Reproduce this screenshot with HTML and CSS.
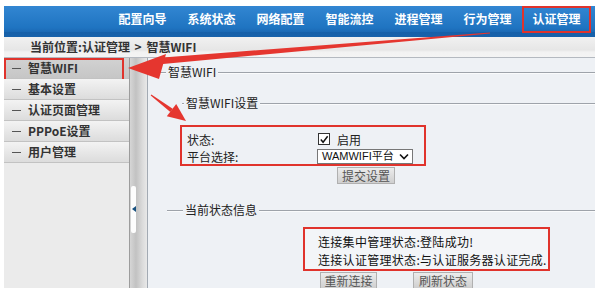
FILE: index.html
```html
<!DOCTYPE html>
<html lang="zh-CN">
<head>
<meta charset="utf-8">
<title>认证管理 - 智慧WIFI</title>
<link rel="stylesheet" href="styles.css">
</head>
<body>
<div class="page">
  <header class="header">
    <nav class="nav">
      <span class="nav-item">配置向导</span>
      <span class="nav-item">系统状态</span>
      <span class="nav-item">网络配置</span>
      <span class="nav-item">智能流控</span>
      <span class="nav-item">进程管理</span>
      <span class="nav-item">行为管理</span>
      <span class="nav-item active">认证管理</span>
    </nav>
  </header>
  <div class="crumb">当前位置:认证管理 &gt; 智慧WIFI</div>
  <div class="main">
    <aside class="sidebar">
      <div class="menu-item active"><span class="dash"></span>智慧WIFI</div>
      <div class="menu-item"><span class="dash"></span>基本设置</div>
      <div class="menu-item"><span class="dash"></span>认证页面管理</div>
      <div class="menu-item"><span class="dash"></span>PPPoE设置</div>
      <div class="menu-item"><span class="dash"></span>用户管理</div>
    </aside>
    <div class="splitter"><div class="pill"><span class="tri"></span></div></div>
    <section class="content">
      <div class="legend l1">智慧WIFI</div>
      <div class="legend l2">智慧WIFI设置</div>
      <div class="hl-box form-box">
        <div class="row r1">
          <span class="label">状态:</span>
          <span class="checkbox"><svg width="11" height="11" viewBox="0 0 11 11"><path d="M2 5.5 L4.5 8.5 L9.5 2" fill="none" stroke="#111" stroke-width="1.6"/></svg></span>
          <span class="check-text">启用</span>
        </div>
        <div class="row r2">
          <span class="label">平台选择:</span>
          <span class="select"><span class="select-text">WAMWIFI平台</span><svg class="chev" width="10" height="7" viewBox="0 0 10 7"><path d="M1 1.5 L5 5.5 L9 1.5" fill="none" stroke="#111" stroke-width="1.6"/></svg></span>
        </div>
      </div>
      <div class="btn submit">提交设置</div>
      <div class="legend l3">当前状态信息</div>
      <div class="hl-box status-box">
        <div class="status-line">连接集中管理状态:登陆成功!</div>
        <div class="status-line">连接认证管理状态:与认证服务器认证完成.</div>
      </div>
      <div class="btn-row">
        <div class="btn reconnect">重新连接</div>
        <div class="btn refresh">刷新状态</div>
      </div>
    </section>
  </div>
</div>
<svg class="arrows" width="604" height="300" viewBox="0 0 604 300">
  <polygon points="490,32.4 163,57.5 163,64 490,33.6" fill="#e5362f"/>
  <polygon points="128,68 166,54 159,79" fill="#e5362f"/>
  <polygon points="150.7,95.4 170.3,111.9 172.7,108.7 151.3,94.6" fill="#e5362f"/>
  <polygon points="186,121 166.8,116.3 176.2,103.9" fill="#e5362f"/>
</svg>
</body>
</html>
```
FILE: styles.css
```css
* {
  box-sizing: border-box;
  margin: 0;
  padding: 0;
}

html, body {
  background: #fff;
}

body {
  position: relative;
  font-family: "Noto Sans CJK SC", "Liberation Sans", sans-serif;
  font-size: 12px;
  color: #222;
  width: 604px;
  height: 300px;
  overflow: hidden;
}

.page {
  margin: 6px 0 0 4px;
  width: 591px;
  height: 282px;
  display: flex;
  flex-direction: column;
}

/* header */
.header {
  height: 31px;
  flex: none;
  background: linear-gradient(to bottom, #3286d2 0%, #1f74c1 70%, #1b69b4 84%, #1660a9 85%, #1862ab 100%);
}

.nav {
  display: flex;
  padding-left: 104px;
  height: 27px;
}

.nav-item {
  width: 69px;
  height: 27px;
  line-height: 26px;
  text-align: center;
  color: #fff;
  font-weight: 700;
  font-size: 12px;
}

.nav-item.active {
  border: 2px solid #e0332c;
  line-height: 22px;
}

/* breadcrumb */
.crumb {
  flex: none;
  height: 21px;
  line-height: 20px;
  padding-left: 26px;
  color: #333;
  font-weight: 700;
  word-spacing: 2px;
  background: linear-gradient(to bottom, #f1f1f1 0%, #e6e6e6 65%, #f2f2f2 75%, #f4f4f4 100%);
  border-bottom: 1px solid #b4b9c0;
}

/* main area */
.main {
  flex: 1;
  display: flex;
  overflow: hidden;
}

.sidebar {
  width: 125px;
  flex: none;
  background: #ebebeb;
}

.menu-item {
  position: relative;
  height: 21px;
  line-height: 20px;
  padding-left: 8px;
  color: #333;
  font-weight: 700;
  background: linear-gradient(to bottom, #f3f3f3, #dcdcdc);
  border-bottom: 1px solid #c2c2c2;
  display: flex;
  align-items: center;
}

.menu-item.active {
  background: linear-gradient(to bottom, #d2d2d2, #c6c6c6);
}

.menu-item.active::after {
  content: "";
  position: absolute;
  left: 0;
  top: 0;
  width: 116px;
  height: 22px;
  border: 2px solid #e0332c;
}

.dash {
  display: inline-block;
  width: 9px;
  height: 1px;
  background: #555;
  margin-right: 7px;
}

/* splitter */
.splitter {
  width: 19px;
  flex: none;
  border-left: 1px solid #9c9c9c;
  border-right: 1px solid #a3aab3;
  background: linear-gradient(to right, #d6d6d6 0%, #c2c2c2 35%, #dcdcdc 75%, #e8e8e8 100%);
  padding-left: 1px;
}

.pill {
  margin-top: 128px;
  width: 5px;
  height: 47px;
  background: #fdfdfd;
  border-radius: 2px;
  display: flex;
  align-items: center;
  justify-content: center;
}

.tri {
  width: 0;
  height: 0;
  border-right: 4px solid #17507f;
  border-top: 3px solid transparent;
  border-bottom: 3px solid transparent;
  margin-top: -2px;
}

/* content */
.content {
  flex: 1;
  background: #eef1f5;
  padding-top: 7px;
}

.legend {
  display: flex;
  align-items: center;
  height: 14px;
  line-height: 14px;
  color: #222;
  white-space: nowrap;
}

.legend::before,
.legend::after {
  content: "";
  border-top: 1px solid #9ea3aa;
  box-shadow: 0 1px 0 #fafbfc;
}

.legend::before {
  margin-right: 2px;
}

.legend::after {
  flex: 1;
  margin-left: 2px;
}

.l1 {
  margin-left: 7px;
}

.l1::before {
  width: 11px;
}

.l2 {
  margin-top: 17px;
  margin-left: 34px;
}

.l2::before {
  width: 2px;
}

.l3 {
  margin-top: 19px;
  margin-left: 19px;
}

.l3::before {
  width: 16px;
}

.hl-box {
  border: 2px solid #e0332c;
}

.form-box {
  margin-top: 15px;
  margin-left: 32px;
  width: 246px;
  height: 41px;
  padding: 3px 0 0 5px;
}

.row {
  display: flex;
  align-items: center;
}

.r1 {
  height: 18px;
}

.r2 {
  height: 16px;
}

.label {
  width: 131px;
  flex: none;
  color: #222;
}

.checkbox {
  width: 12px;
  height: 12px;
  border: 1px solid #333;
  background: #fff;
  display: flex;
  align-items: center;
  justify-content: center;
}

.check-text {
  margin-left: 7px;
}

.select {
  margin-left: -1px;
  width: 96px;
  height: 15px;
  border: 1px solid #777;
  background: #fff;
  display: flex;
  align-items: center;
  justify-content: space-between;
  padding: 0 3px 0 4px;
  overflow: hidden;
}

.select-text {
  font-family: "Liberation Sans", "Noto Sans CJK SC", sans-serif;
  font-size: 11px;
  line-height: 13px;
  white-space: nowrap;
  color: #111;
}

.chev {
  flex: none;
}

.btn {
  height: 17px;
  line-height: 16px;
  text-align: center;
  color: #555;
  background: linear-gradient(to bottom, #ececec, #cfcfcf);
  border: 1px solid #b0b0b0;
  font-size: 12px;
}

.submit {
  margin-top: 1px;
  margin-left: 189px;
  width: 58px;
}

.status-box {
  margin-top: 10px;
  margin-left: 155px;
  width: 247px;
  height: 44px;
  padding: 4px 0 0 13px;
  background: #f3f5f8;
}

.status-line {
  height: 18px;
  line-height: 18px;
  color: #111;
  white-space: nowrap;
  letter-spacing: 0.3px;
}

.btn-row {
  display: flex;
  margin-top: 1px;
  margin-left: 172px;
}

.reconnect {
  width: 57px;
}

.refresh {
  margin-left: 36px;
  width: 60px;
}

/* annotation arrows overlay */
.arrows {
  position: absolute;
  left: 0;
  top: 0;
  pointer-events: none;
}
```
